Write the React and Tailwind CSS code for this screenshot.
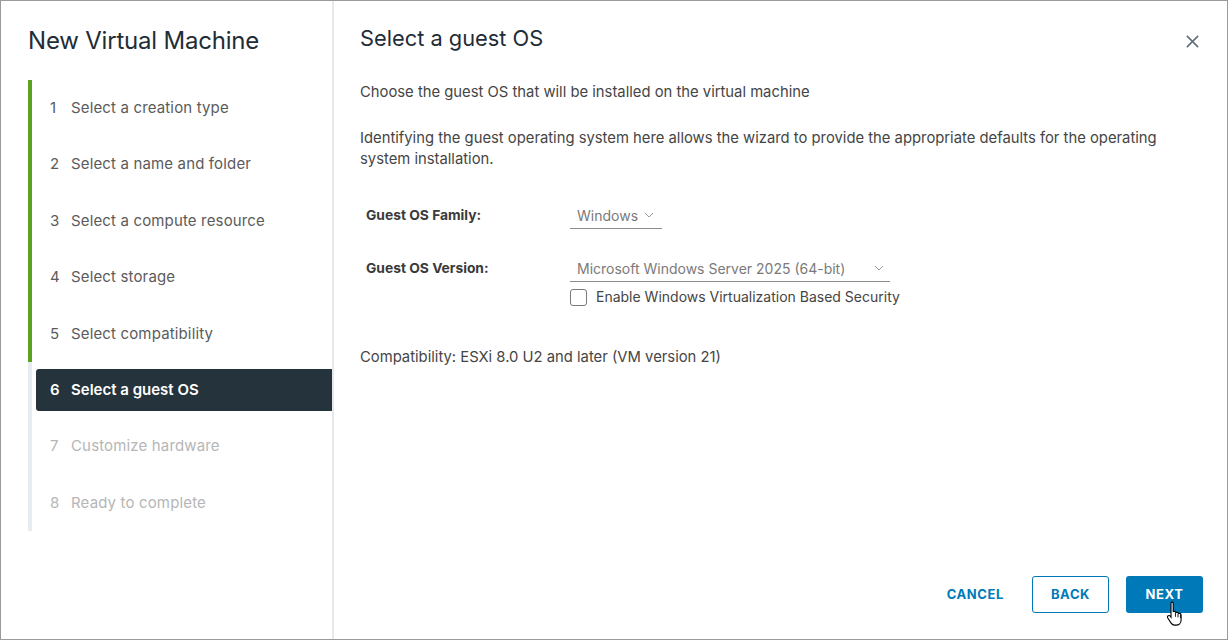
import React from 'react';

const steps = [
  { n: 1, label: 'Select a creation type', state: 'done' },
  { n: 2, label: 'Select a name and folder', state: 'done' },
  { n: 3, label: 'Select a compute resource', state: 'done' },
  { n: 4, label: 'Select storage', state: 'done' },
  { n: 5, label: 'Select compatibility', state: 'done' },
  { n: 6, label: 'Select a guest OS', state: 'active' },
  { n: 7, label: 'Customize hardware', state: 'todo' },
  { n: 8, label: 'Ready to complete', state: 'todo' },
];

const Chevron = ({ className }) => (
  <svg viewBox="0 0 10 6" className={className} fill="none" stroke="currentColor" strokeWidth="1">
    <path d="M1 1l4 4 4-4" />
  </svg>
);

const StepRow = ({ step }) => {
  const line = step.state === 'done' ? 'bg-[#5aa220]' : 'bg-[#e6ecf0]';
  return (
    <div className="flex h-[56.4px] items-stretch">
      <div className={`w-[4px] shrink-0 ${line}`} />
      {step.state === 'active' ? (
        <div className="my-[7px] ml-[4px] flex flex-1 items-center rounded-l-[3px] bg-[#25333d] pl-[14px] text-[15px] font-semibold text-white">
          <span className="w-[21px]">{step.n}</span>
          <span>{step.label}</span>
        </div>
      ) : (
        <div
          className={`ml-[4px] flex flex-1 items-center pl-[14px] text-[15px] tracking-[0.15px] ${
            step.state === 'done' ? 'text-[#5b5b5b]' : 'text-[#b6b6b6]'
          }`}
        >
          <span className="w-[21px]">{step.n}</span>
          <span>{step.label}</span>
        </div>
      )}
    </div>
  );
};

const App = () => {
  return (
    <div
      className="relative h-[642px] w-[1230px] overflow-hidden bg-white"
      style={{ fontFamily: 'Inter, "Open Sans", sans-serif' }}
    >
      <div className="flex h-[640px] w-[1228px] border border-[#9a9a9a] bg-white">
        {/* left nav */}
        <div className="flex w-[333px] shrink-0 flex-col border-r-2 border-[#e3e9ed] pl-[27px]">
          <h1 className="mt-[24px] text-[24px] leading-[32px] tracking-[-0.2px] text-[#1f2d37]">
            New Virtual Machine
          </h1>
          <div className="mt-[23px] flex flex-col">
            {steps.map((s) => (
              <StepRow key={s.n} step={s} />
            ))}
          </div>
        </div>

        {/* content */}
        <div className="flex flex-1 flex-col pl-[26px] pr-[24px]">
          <div className="flex items-start justify-between">
            <h2 className="mt-[22px] text-[21.8px] leading-[30px] text-[#1f2d37]">Select a guest OS</h2>
            <button className="mt-[33px] mr-[3px] text-[#5f6b76]">
              <svg viewBox="0 0 16 16" className="h-[15px] w-[15px]" fill="none" stroke="currentColor" strokeWidth="1.6">
                <path d="M2 2l12 12M14 2L2 14" />
              </svg>
            </button>
          </div>

          <p className="mt-[29px] text-[14.8px] leading-[21px] text-[#454545]">
            Choose the guest OS that will be installed on the virtual machine
          </p>
          <p className="mt-[25px] pr-[20px] text-[14.8px] leading-[21px] text-[#454545]">
            Identifying the guest operating system here allows the wizard to provide the appropriate defaults for the operating system installation.
          </p>

          <div className="mt-[32px] flex items-center">
            <div className="w-[210px] pl-[6px] text-[13.8px] font-bold text-[#3a3a3a]">Guest OS Family:</div>
            <div className="flex h-[27px] w-[92px] items-center border-b border-[#8c8c8c] pl-[7px] text-[14px] text-[#7a7a7a]">
              Windows
              <Chevron className="ml-[6px] h-[6px] w-[10px] text-[#9a9a9a]" />
            </div>
          </div>

          <div className="mt-[26px] flex items-start">
            <div className="flex h-[26px] w-[210px] items-center pl-[6px] text-[13.8px] font-bold text-[#3a3a3a]">
              Guest OS Version:
            </div>
            <div className="flex flex-col">
              <div className="flex h-[27px] w-[320px] items-center justify-between border-b border-[#8c8c8c] pl-[7px] pr-[6px] text-[14px] text-[#7a7a7a]">
                Microsoft Windows Server 2025 (64-bit)
                <Chevron className="h-[6px] w-[10px] text-[#9a9a9a]" />
              </div>
              <label className="mt-[5px] flex items-center text-[14px] leading-[20px] text-[#454545]">
                <span className="h-[17px] w-[17px] rounded-[3px] border border-[#7a7a7a] bg-white" />
                <span className="ml-[9px]">Enable Windows Virtualization Based Security</span>
              </label>
            </div>
          </div>

          <p className="mt-[40px] text-[14.8px] leading-[21px] text-[#454545]">
            Compatibility: ESXi 8.0 U2 and later (VM version 21)
          </p>

          <div className="mt-auto mb-[26px] flex items-center justify-end">
            <button className="mr-[28px] h-[36px] px-[0px] text-[13px] font-bold tracking-[0.6px] text-[#0079b8]">
              CANCEL
            </button>
            <button className="h-[37px] w-[77px] rounded-[3px] border border-[#0079b8] text-[13px] font-bold tracking-[0.6px] text-[#0079b8]">
              BACK
            </button>
            <button className="ml-[17px] h-[37px] w-[77px] rounded-[3px] bg-[#0079b8] text-[13px] font-bold tracking-[0.6px] text-white">
              NEXT
            </button>
          </div>
        </div>
      </div>

      {/* mouse cursor over NEXT */}
      <svg viewBox="0 0 18 24" className="absolute left-[1166px] top-[600px] h-[27px] w-[20px]">
        <path
          d="M5 1.5c.9 0 1.5.6 1.5 1.5v7.2l1-.2c.9 0 1.4.5 1.5 1.1l.9-.2c.8 0 1.3.5 1.4 1.1l.8-.1c.9 0 1.5.6 1.5 1.5v4.5c0 2.8-2 4.6-4.6 4.6H7.8c-1.4 0-2.4-.6-3.2-1.8L1.6 16c-.5-.8-.3-1.6.4-2 .7-.4 1.4-.2 1.9.5l.6.9V3c0-.9.6-1.5 1.5-1.5z"
          fill="white"
          stroke="black"
          strokeWidth="1"
        />
        <path d="M8.5 11v4M10.8 12v3.5M13 13v3" stroke="black" strokeWidth="0.8" />
      </svg>
    </div>
  );
};

export default App;
